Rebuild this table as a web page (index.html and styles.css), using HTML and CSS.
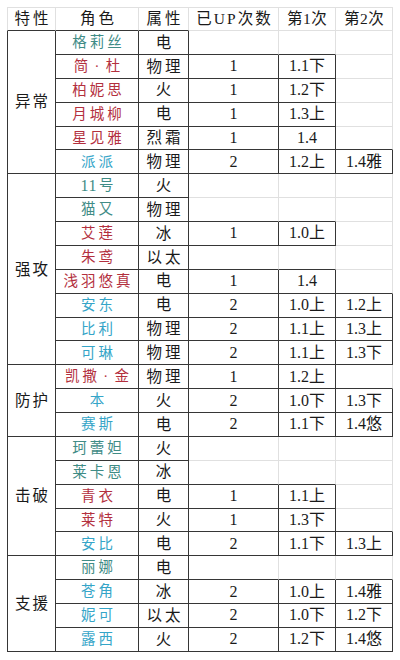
FILE: index.html
```html
<!DOCTYPE html>
<html lang="zh-CN">
<head>
<meta charset="utf-8">
<title>角色UP次数统计</title>
<link rel="stylesheet" href="styles.css">
</head>
<body>
<div class="sheet">
  <div class="cell h first">特性</div>
  <div class="cell h db">角色</div>
  <div class="cell h db">属性</div>
  <div class="cell h up">已UP次数</div>
  <div class="cell h tight">第1次</div>
  <div class="cell h tight">第2次</div>

  <div class="cell grp span6">异常</div>
  <div class="cell n t">格莉丝</div><div class="cell a">电</div><div class="cell db"></div><div class="cell db"></div><div class="cell"></div>
  <div class="cell n r">简<span class="dot">·</span>杜</div><div class="cell a">物理</div><div class="cell v dr db">1</div><div class="cell v dr db">1.1下</div><div class="cell"></div>
  <div class="cell n r">柏妮思</div><div class="cell a">火</div><div class="cell v dr db">1</div><div class="cell v dr db">1.2下</div><div class="cell"></div>
  <div class="cell n r">月城柳</div><div class="cell a">电</div><div class="cell v dr db">1</div><div class="cell v dr db">1.3上</div><div class="cell"></div>
  <div class="cell n r">星见雅</div><div class="cell a">烈霜</div><div class="cell v dr db">1</div><div class="cell v dr db">1.4</div><div class="cell db"></div>
  <div class="cell n c">派派</div><div class="cell a">物理</div><div class="cell v dr db">2</div><div class="cell v dr db">1.2上</div><div class="cell v dr db">1.4雅</div>

  <div class="cell grp span8">强攻</div>
  <div class="cell n t"><span class="num">11</span>号</div><div class="cell a">火</div><div class="cell"></div><div class="cell"></div><div class="cell"></div>
  <div class="cell n t">猫又</div><div class="cell a">物理</div><div class="cell db"></div><div class="cell db"></div><div class="cell"></div>
  <div class="cell n r">艾莲</div><div class="cell a">冰</div><div class="cell v dr db">1</div><div class="cell v dr db">1.0上</div><div class="cell"></div>
  <div class="cell n r">朱鸢</div><div class="cell a">以太</div><div class="cell db"></div><div class="cell db"></div><div class="cell"></div>
  <div class="cell n r">浅羽悠真</div><div class="cell a">电</div><div class="cell v dr db">1</div><div class="cell v dr db">1.4</div><div class="cell db"></div>
  <div class="cell n c">安东</div><div class="cell a">电</div><div class="cell v dr db">2</div><div class="cell v dr db">1.0上</div><div class="cell v dr db">1.2上</div>
  <div class="cell n c">比利</div><div class="cell a">物理</div><div class="cell v dr db">2</div><div class="cell v dr db">1.1上</div><div class="cell v dr db">1.3上</div>
  <div class="cell n c">可琳</div><div class="cell a">物理</div><div class="cell v dr db">2</div><div class="cell v dr db">1.1上</div><div class="cell v dr db">1.3下</div>

  <div class="cell grp span3">防护</div>
  <div class="cell n r">凯撒<span class="dot">·</span>金</div><div class="cell a">物理</div><div class="cell v dr db">1</div><div class="cell v dr db">1.2上</div><div class="cell db"></div>
  <div class="cell n c">本</div><div class="cell a">火</div><div class="cell v dr db">2</div><div class="cell v dr db">1.0下</div><div class="cell v dr db">1.3下</div>
  <div class="cell n c">赛斯</div><div class="cell a">电</div><div class="cell v dr db">2</div><div class="cell v dr db">1.1下</div><div class="cell v dr db">1.4悠</div>

  <div class="cell grp span5">击破</div>
  <div class="cell n t">珂蕾妲</div><div class="cell a">火</div><div class="cell"></div><div class="cell"></div><div class="cell"></div>
  <div class="cell n t">莱卡恩</div><div class="cell a">冰</div><div class="cell db"></div><div class="cell db"></div><div class="cell"></div>
  <div class="cell n r">青衣</div><div class="cell a">电</div><div class="cell v dr db">1</div><div class="cell v dr db">1.1上</div><div class="cell"></div>
  <div class="cell n r">莱特</div><div class="cell a">火</div><div class="cell v dr db">1</div><div class="cell v dr db">1.3下</div><div class="cell db"></div>
  <div class="cell n c">安比</div><div class="cell a">电</div><div class="cell v dr db">2</div><div class="cell v dr db">1.1下</div><div class="cell v dr db">1.3上</div>

  <div class="cell grp span4">支援</div>
  <div class="cell n t">丽娜</div><div class="cell a">电</div><div class="cell db"></div><div class="cell db"></div><div class="cell db"></div>
  <div class="cell n c">苍角</div><div class="cell a">冰</div><div class="cell v dr db">2</div><div class="cell v dr db">1.0上</div><div class="cell v dr db">1.4雅</div>
  <div class="cell n c">妮可</div><div class="cell a">以太</div><div class="cell v dr db">2</div><div class="cell v dr db">1.0下</div><div class="cell v dr db">1.2下</div>
  <div class="cell n c">露西</div><div class="cell a">火</div><div class="cell v dr db">2</div><div class="cell v dr db">1.2下</div><div class="cell v dr db">1.4悠</div>
</div>
</body>
</html>
```

FILE: styles.css
```css
html, body {
  margin: 0;
  padding: 0;
  background: #ffffff;
}

body {
  font-family: "Liberation Serif", "Noto Sans CJK SC", serif;
  color: #1a1a1a;
}

.sheet {
  --lt: #e0e0e0;
  --dk: #363636;
  display: grid;
  grid-template-columns: 49px 83px 50px 90px 57px 57px;
  grid-template-rows: 24px repeat(26, 23.885px);
  margin: 7px 0 0 7px;
  width: max-content;
}

.cell {
  box-sizing: border-box;
  display: flex;
  align-items: center;
  justify-content: center;
  border-right: 1px solid var(--lt);
  border-bottom: 1px solid var(--lt);
  font-size: 15px;
  line-height: 1;
  white-space: nowrap;
}

.h {
  border-top: 1px solid var(--lt);
  letter-spacing: 3px;
  padding-left: 3px;
  font-size: 15.5px;
}

.h.first {
  border-left: 1px solid var(--lt);
  border-bottom-color: var(--dk);
}

.h.up {
  letter-spacing: 2px;
  padding-left: 2px;
}

.h.tight {
  letter-spacing: 0.5px;
  padding-left: 0.5px;
}

.grp {
  grid-column: 1;
  border-left: 1px solid var(--dk);
  border-right-color: var(--dk);
  border-bottom-color: var(--dk);
  letter-spacing: 2px;
  padding-left: 2px;
  font-size: 15.5px;
}

.span6 { grid-row: span 6; }
.span8 { grid-row: span 8; }
.span3 { grid-row: span 3; }
.span5 { grid-row: span 5; }
.span4 { grid-row: span 4; }

.n {
  font-size: 14.5px;
  letter-spacing: 3px;
  padding-left: 3px;
  border-right-color: var(--dk);
  border-bottom-color: var(--dk);
}

.num {
  letter-spacing: 0.5px;
  font-size: 16px;
  margin-right: 2px;
}

.dot {
  display: inline-block;
  width: 1em;
  text-align: center;
}

.t { color: #3f8c86; }
.r { color: #b3303e; }
.c { color: #35a5c8; }

.a {
  font-size: 15.5px;
  letter-spacing: 3px;
  padding-left: 3px;
  border-right-color: var(--dk);
  border-bottom-color: var(--dk);
}

.v {
  font-size: 16px;
}

.dr { border-right-color: var(--dk); }
.db { border-bottom-color: var(--dk); }
```
